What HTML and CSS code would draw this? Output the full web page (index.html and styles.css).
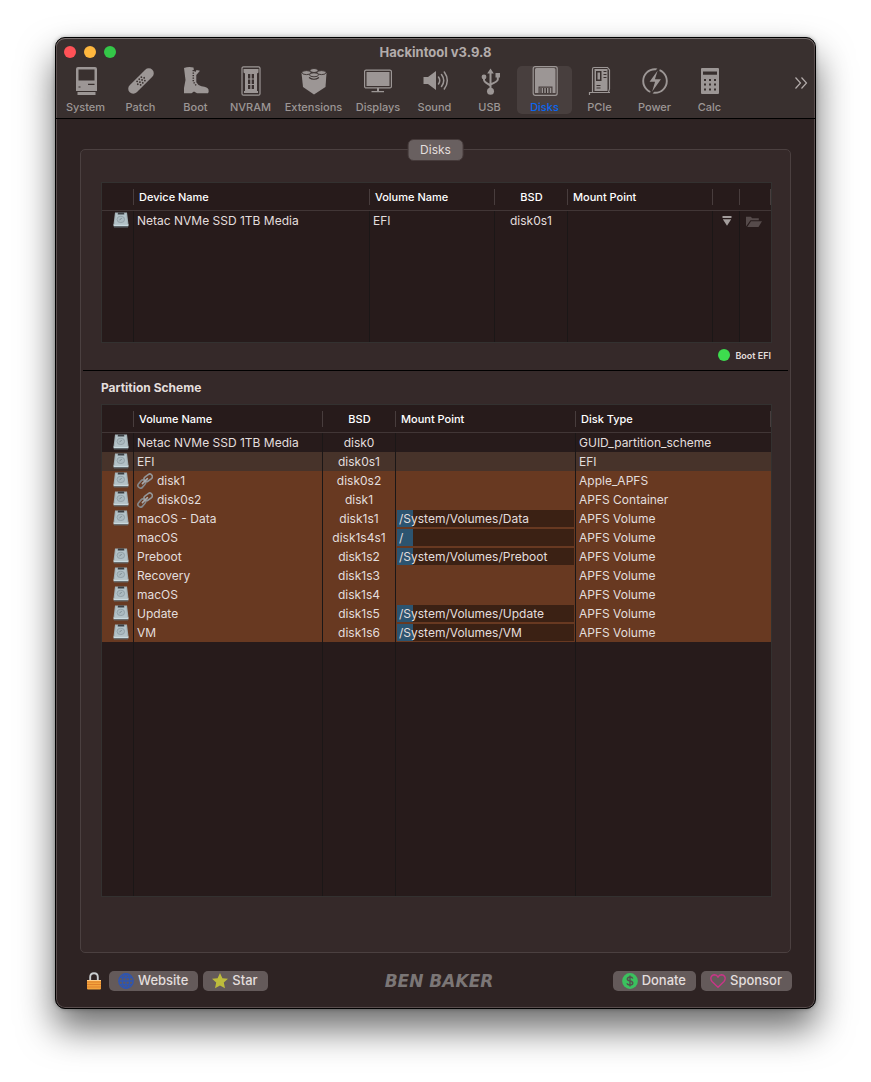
FILE: index.html
```
<!DOCTYPE html>
<html lang="en">
<head>
<meta charset="utf-8">
<title>Hackintool</title>
<link rel="stylesheet" href="styles.css">
</head>
<body>
<svg class="defs" aria-hidden="true">
  <symbol id="drive" viewBox="0 0 16 16">
    <path d="M2 .5h12L15.500 12.800H.5z" fill="#a2b0b5"/>
    <path d="M3 1.500h10l1.200 10.500H1.800z" fill="#b3c2c8"/>
    <path d="M5 .6h6l.3 2H4.700z" fill="#3b3e42"/>
    <ellipse cx="7.800" cy="7.400" rx="3.800" ry="3.200" fill="#abbac0" stroke="#8d9ba1" stroke-width=".8"/>
    <path d="M6.500 7.800l2.200-1.400" stroke="#6f7d83" stroke-width=".8" fill="none"/>
    <path d="M.5 12.300h15v2H.5z" fill="#c9dae0"/>
    <path d="M1 14.200h14v1.200H1z" fill="#626d72"/>
  </symbol>
  <symbol id="chain" viewBox="0 0 16 16">
    <g fill="none" stroke-width="1.600">
      <rect x="-4.500" y="-2.600" width="9" height="5.200" rx="2.600" transform="translate(4.800 11) rotate(-50)" stroke="#85888b"/>
      <rect x="-4.500" y="-2.600" width="9" height="5.200" rx="2.600" transform="translate(11.200 4.800) rotate(-36)" stroke="#94979a"/>
      <path d="M5.400 10.600l5-5" stroke="#a9abad" stroke-linecap="round"/>
    </g>
  </symbol>
</svg>

<main class="window">
  <header class="toolbar">
    <div class="titlebar">
      <div class="lights">
        <button class="light close" aria-label="Close"></button>
        <button class="light minimize" aria-label="Minimize"></button>
        <button class="light zoom" aria-label="Zoom"></button>
      </div>
      <h1 class="title">Hackintool v3.9.8</h1>
    </div>
    <nav class="items">
      <button class="item"><svg viewBox="0 0 30 30"><path fill-rule="evenodd" d="M7 1h17a2 2 0 0 1 2 2v22H5V3a2 2 0 0 1 2-2zM7.500 3.500v11h16v-11zM17 19h6.500v-1.200H17zM7.500 20.500v1h2v-1z"/><path d="M6.500 26h18v3h-18z"/></svg><span>System</span></button>
      <button class="item"><svg viewBox="0 0 30 30"><g transform="rotate(-45 15 15)"><rect x="-1" y="10" width="32" height="10" rx="5"/><g fill="#39302f"><circle cx="12" cy="12.500" r=".9"/><circle cx="15" cy="12.500" r=".9"/><circle cx="18" cy="12.500" r=".9"/><circle cx="10.500" cy="15" r=".9"/><circle cx="13.500" cy="15" r=".9"/><circle cx="16.500" cy="15" r=".9"/><circle cx="19.500" cy="15" r=".9"/><circle cx="12" cy="17.500" r=".9"/><circle cx="15" cy="17.500" r=".9"/><circle cx="18" cy="17.500" r=".9"/></g></g></svg><span>Patch</span></button>
      <button class="item"><svg viewBox="0 0 30 30"><path d="M3 2Q7.500.4 12.500 1.500l.5 3.500 1.500 1 1-2 3.500.7-3.700 4.300v7.200q1.500 3 5.200 4 6.500.8 7 3.300.6 2.500-.6 3.700H16l-3-1.700-2.500 1.700H3V22l1.500-8z"/><path d="M12.300 4v11.700l3 4" fill="none" stroke="#39302f" stroke-width="1.500" stroke-dasharray="1.300 1.200"/></svg><span>Boot</span></button>
      <button class="item"><svg viewBox="0 0 30 30"><rect x="6" y=".8" width="18" height="28.400" rx="1.500" fill="none" stroke="currentColor" stroke-width="1.200"/><path fill-rule="evenodd" d="M7.500 3h15v3.500l-1.500 1V25h1v2H8v-2h1V7.500l-1.500-1zM12 8v4.500h2.300V8zm3.700 0v4.500H18V8zM12 13.500V18h2.300v-4.500zm3.700 0V18H18v-4.500zM12 19v4h2.300v-4zm3.700 0v4H18v-4z"/></svg><span>NVRAM</span></button>
      <button class="item wide"><svg viewBox="0 0 30 30"><path d="M2.500 7h25l-1 14L15 28.500 4 21z"/><g stroke="#39302f" stroke-width=".9"><ellipse cx="15" cy="4.500" rx="4" ry="2"/><ellipse cx="7.500" cy="6.600" rx="4.500" ry="2"/><ellipse cx="22.500" cy="6.600" rx="4.500" ry="2"/><ellipse cx="15" cy="8.800" rx="4.500" ry="2"/></g><path d="M10 11.500q5 3.500 10 0" fill="none" stroke="#39302f" stroke-width="1.200"/></svg><span>Extensions</span></button>
      <button class="item medium"><svg viewBox="0 0 30 30"><rect x="1.600" y="4.100" width="26.800" height="17.800" rx="1.500" fill="none" stroke="currentColor" stroke-width="1.200"/><path d="M3.500 6h23v14h-23zM14 22h2v3h5v1.300H8.500V25H14z"/></svg><span>Displays</span></button>
      <button class="item"><svg viewBox="0 0 30 30"><path d="M3.500 11H8l8-6v19l-8-6H3.500z"/><g fill="none" stroke="currentColor" stroke-width="1.500" stroke-linecap="round"><path d="M18.500 11q2.500 3.500 0 7M21.500 8.500q4.500 6 0 12M24.300 6q6 8.500 0 17"/></g></svg><span>Sound</span></button>
      <button class="item"><svg viewBox="0 0 30 30"><circle cx="15.500" cy="25.200" r="3.500"/><path d="M15.500 2.500l3.300 5h-6.600zM20.500 7h4.500v4.500h-4.500z"/><circle cx="9" cy="11" r="2.400"/><path d="M15.500 6v18M9 11v3q0 2 6.500 5.500M22.800 10v3.500q0 2-7.300 5" fill="none" stroke="currentColor" stroke-width="2"/></svg><span>USB</span></button>
      <button class="item selected" aria-pressed="true"><svg viewBox="0 0 30 30"><rect x="3.200" y=".7" width="24" height="28.600" rx="2" fill="none" stroke="currentColor" stroke-width="1.200"/><path fill-rule="evenodd" d="M6.500 2H24a1.500 1.500 0 0 1 1.500 1.500V27H5V3.500A1.500 1.500 0 0 1 6.500 2zM8.500 20.500V27h1.200v-5.200h11.600V27h1.200v-6.500z"/><path d="M11 22v5m2.700-5v5m2.700-5v5m2.700-5v5" stroke="#39302f" stroke-width="1.200"/></svg><span>Disks</span></button>
      <button class="item"><svg viewBox="0 0 30 30"><path d="M4.500 29v-2.500h20.500M7.500 26V3q0-1.500 1.500-1.500h13.500L24.500 4v19l-1 3" fill="none" stroke="currentColor" stroke-width="1.200"/><path fill-rule="evenodd" d="M9.500 3h13v22h-13zM11 5v10h5.500V5zM18.500 5v1h3V5zm0 3v1h3V8zm0 3v1h3v-1zm-7 8v1h4v-1zm0 2.500v1h4v-1z"/><path d="M12.500 6.500H15v7h-2.500z"/></svg><span>PCIe</span></button>
      <button class="item"><svg viewBox="0 0 30 30"><circle cx="15" cy="15" r="11.800" fill="none" stroke="currentColor" stroke-width="1.900"/><path d="M20 0L8 16.500h6L10 30l12.500-17.500H16z" stroke="#39302f" stroke-width="1.600"/></svg><span>Power</span></button>
      <button class="item"><svg viewBox="0 0 30 30"><path fill-rule="evenodd" d="M7 2h16a1 1 0 0 1 1 1v24a1 1 0 0 1-1 1H7a1 1 0 0 1-1-1V3a1 1 0 0 1 1-1zM8 5.500v3.300h14V5.500z"/><path d="M9 14h13M9 18.500h13M9 23.500h13" stroke="#39302f" stroke-width="2" stroke-dasharray="2 3"/></svg><span>Calc</span></button>
      <button class="more" aria-label="More items"><svg viewBox="0 0 14 14"><path d="M1.500 1.500L6.500 7l-5 5.500M7.500 1.500l5 5.500-5 5.500" fill="none" stroke="currentColor" stroke-width="1.200"/></svg></button>
    </nav>
  </header>

  <section class="content">
    <div class="group">
      <button class="tab">Disks</button>

      <table class="grid">
        <colgroup><col class="c-icon"><col class="c-device"><col class="c-volume"><col class="c-bsd"><col class="c-mount"><col class="c-eject"><col></colgroup>
        <thead><tr><th></th><th>Device Name</th><th>Volume Name</th><th class="center">BSD</th><th>Mount Point</th><th></th><th></th></tr></thead>
        <tbody>
          <tr><td class="icon"><svg class="drive"><use href="#drive"/></svg></td><td>Netac NVMe SSD 1TB Media</td><td>EFI</td><td class="center">disk0s1</td><td></td>
            <td class="icon"><button class="action" aria-label="Mount"><svg class="mount" viewBox="0 0 10 10"><path d="M.5 0h9v2h-9zM.8 3.200h8.400L5 9.800z"/></svg></button></td>
            <td class="icon"><button class="action dim" aria-label="Open"><svg class="folder" viewBox="0 0 16 12"><path d="M0 10.500V.8h4.800l1.400 1.500h6.600v2H4.500zM5 5.300h11L12.500 11H1.200z"/></svg></button></td></tr>
          <tr class="filler small"><td></td><td></td><td></td><td></td><td></td><td></td><td></td></tr>
        </tbody>
      </table>

      <div class="legend"><span class="dot"></span>Boot EFI</div>
      <hr class="divider">
      <h2 class="heading">Partition Scheme</h2>

      <table class="grid">
        <colgroup><col class="c-icon"><col class="c-name"><col class="c-bsd"><col class="c-path"><col></colgroup>
        <thead><tr><th></th><th>Volume Name</th><th class="center">BSD</th><th>Mount Point</th><th>Disk Type</th></tr></thead>
        <tbody>
          <tr><td class="icon"><svg class="drive"><use href="#drive"/></svg></td><td>Netac NVMe SSD 1TB Media</td><td class="center">disk0</td><td></td><td>GUID_partition_scheme</td></tr>
          <tr class="efi"><td class="icon"><svg class="drive"><use href="#drive"/></svg></td><td>EFI</td><td class="center">disk0s1</td><td></td><td>EFI</td></tr>
          <tr class="apfs"><td class="icon"><svg class="drive"><use href="#drive"/></svg></td><td><svg class="chain"><use href="#chain"/></svg>disk1</td><td class="center">disk0s2</td><td></td><td>Apple_APFS</td></tr>
          <tr class="apfs"><td class="icon"><svg class="drive"><use href="#drive"/></svg></td><td><svg class="chain"><use href="#chain"/></svg>disk0s2</td><td class="center">disk1</td><td></td><td>APFS Container</td></tr>
          <tr class="apfs"><td class="icon"><svg class="drive"><use href="#drive"/></svg></td><td>macOS - Data</td><td class="center">disk1s1</td><td class="field"><input class="path" aria-label="Mount point of disk1s1" value="/System/Volumes/Data" readonly></td><td>APFS Volume</td></tr>
          <tr class="apfs"><td></td><td>macOS</td><td class="center">disk1s4s1</td><td class="field"><input class="path" aria-label="Mount point of disk1s4s1" value="/" readonly></td><td>APFS Volume</td></tr>
          <tr class="apfs"><td class="icon"><svg class="drive"><use href="#drive"/></svg></td><td>Preboot</td><td class="center">disk1s2</td><td class="field"><input class="path" aria-label="Mount point of disk1s2" value="/System/Volumes/Preboot" readonly></td><td>APFS Volume</td></tr>
          <tr class="apfs"><td class="icon"><svg class="drive"><use href="#drive"/></svg></td><td>Recovery</td><td class="center">disk1s3</td><td></td><td>APFS Volume</td></tr>
          <tr class="apfs"><td class="icon"><svg class="drive"><use href="#drive"/></svg></td><td>macOS</td><td class="center">disk1s4</td><td></td><td>APFS Volume</td></tr>
          <tr class="apfs"><td class="icon"><svg class="drive"><use href="#drive"/></svg></td><td>Update</td><td class="center">disk1s5</td><td class="field"><input class="path" aria-label="Mount point of disk1s5" value="/System/Volumes/Update" readonly></td><td>APFS Volume</td></tr>
          <tr class="apfs"><td class="icon"><svg class="drive"><use href="#drive"/></svg></td><td>VM</td><td class="center">disk1s6</td><td class="field"><input class="path" aria-label="Mount point of disk1s6" value="/System/Volumes/VM" readonly></td><td>APFS Volume</td></tr>
          <tr class="filler large"><td></td><td></td><td></td><td></td><td></td></tr>
        </tbody>
      </table>
    </div>
  </section>

  <footer class="footer">
    <div class="side">
      <button class="lock" aria-label="Lock"><svg viewBox="0 0 16 18"><path d="M4.200 9V5q0-3.800 3.800-3.800T11.800 5v4" fill="none" stroke="#c9cdcf" stroke-width="1.900"/><rect x="1" y="8" width="14" height="9.500" rx="1" fill="#f2a33c"/><path d="M1 10h14M1 12.500h14M1 15h14" stroke="#d9782a" stroke-width=".8"/><path d="M1 8.500h14" stroke="#ffd08a"/></svg></button>
      <button class="push"><svg viewBox="0 0 16 16" fill="none" stroke="#2f55b0" stroke-width="1.400"><circle cx="8" cy="8" r="7.200"/><ellipse cx="8" cy="8" rx="3.600" ry="7.200"/><path d="M8 1v14M1 8h14M2.200 4.500h11.600M2.200 11.500h11.600"/></svg>Website</button>
      <button class="push"><svg viewBox="0 0 16 16"><path d="M8 0l2.400 5.200 5.600.6-4.200 3.800 1.200 5.600L8 12.400 3 15.200l1.200-5.600L0 5.800l5.600-.6z" fill="#bdbb3c"/></svg>Star</button>
    </div>
    <a class="brand" href="#">BEN BAKER</a>
    <div class="side end">
      <button class="push"><svg viewBox="0 0 16 16"><circle cx="8" cy="8" r="7.900" fill="#3bc15e"/><path d="M10.800 5.600Q10.300 4 8 4T5.300 6q0 1.600 2.700 2t2.800 2.100Q10.800 12 8 12t-2.900-1.700M8 2.500v11" fill="none" stroke="#56504f" stroke-width="1.400"/></svg>Donate</button>
      <button class="push"><svg viewBox="0 0 16 16"><path d="M8 14.200L2 8.500Q.4 6.500 1 4.300 2 1.800 4.500 1.800 7 1.900 8 4.200 9 1.900 11.500 1.800 14 1.800 15 4.300 15.600 6.500 14 8.500z" fill="none" stroke="#c93587" stroke-width="1.400" stroke-linejoin="round"/></svg>Sponsor</button>
    </div>
  </footer>
</main>
</body>
</html>
```
FILE: styles.css
```
* {
  box-sizing: border-box;
}

body {
  margin: 0;
  padding: 37px 55px 73px;
  background: #fff;
  color: #e3dedd;
  font: 12px/19px Inter, "Liberation Sans", sans-serif;
}

button {
  margin: 0;
  padding: 0;
  border: 0;
  background: none;
  color: inherit;
  font: inherit;
}

svg {
  display: block;
  flex: none;
}

.defs {
  position: absolute;
  width: 0;
  height: 0;
}

.window {
  overflow: hidden;
  border: 1px solid #000;
  border-radius: 10px;
  background: #2e2323;
  box-shadow: inset 0 0 0 1px #5a4e4e, 0 0 4px rgba(0, 0, 0, .3), 0 20px 36px rgba(0, 0, 0, .58);
}

/* Title bar and toolbar */

.toolbar {
  padding-bottom: 4px;
  border-bottom: 1px solid #000;
  background: #39302f;
  box-shadow: inset 0 1px #7a7271, inset 1px 0 #5a4e4e, inset -1px 0 #5a4e4e;
  border-radius: 9px 9px 0 0;
}

.titlebar {
  display: grid;
  grid-template-columns: 1fr auto 1fr;
  align-items: center;
  height: 28px;
  padding: 0 8px;
}

.lights {
  display: flex;
  gap: 8px;
}

.light {
  width: 12px;
  height: 12px;
  border-radius: 50%;
}

.close { background: #ff5257; }
.minimize { background: #ffb73e; }
.zoom { background: #34c748; }

.title {
  margin: 0;
  color: #b3acab;
  font-size: 13px;
  font-weight: 700;
}

.items {
  display: flex;
  padding: 0 7px 0 2px;
}

.item {
  display: flex;
  flex-direction: column;
  align-items: center;
  justify-content: flex-start;
  gap: 4px;
  width: 55px;
  height: 48px;
  border-radius: 5px;
  color: #9c9695;
  font-size: 11px;
  font-weight: 500;
  line-height: 15px;
}

.item.wide { width: 71px; }
.item.medium { width: 58px; }

.item svg {
  width: 30px;
  height: 30px;
  fill: currentColor;
}

.item.selected { background: #483f3e; }
.item.selected span { color: #0a66f0; }

.more {
  margin-left: auto;
  padding-bottom: 14px;
  color: #b3acab;
}

.more svg {
  width: 14px;
  height: 14px;
}

/* Disks pane */

.content {
  padding: 30px 24px 0;
}

.group {
  position: relative;
  padding: 32px 18px 55px 20px;
  border: 1px solid #4b4040;
  border-radius: 5px;
  background: #352929;
}

.tab {
  position: absolute;
  top: -11px;
  left: 50%;
  height: 22px;
  padding: 0 12px 2px;
  transform: translateX(-50%);
  border: 1px solid #463b3b;
  border-radius: 6px;
  background: #696060;
}

.grid {
  width: 100%;
  border: 1px solid #333130;
  border-spacing: 0;
  table-layout: fixed;
  background: #271b1b;
}

.c-icon { width: 32px; }
.c-device { width: 236px; }
.c-volume { width: 125px; }
.c-bsd { width: 73px; }
.c-mount { width: 145px; }
.c-eject { width: 27px; }
.c-name { width: 189px; }
.c-path { width: 180px; }

.grid th {
  height: 28px;
  padding: 2px 5px 0;
  border-bottom: 1px solid #413636;
  background: linear-gradient(#483d3d, #483d3d) right center / 1px 16px no-repeat;
  color: #fff;
  font-size: 11px;
  font-weight: 500;
  text-align: left;
}

.grid td {
  height: 19px;
  padding: 0 3px;
  border-right: 1px solid #1b1717;
  white-space: nowrap;
}

.grid td:last-child { border-right: 0; }

.grid .center {
  padding-right: 0;
  padding-left: 0;
  text-align: center;
}

.grid .icon {
  padding: 1px 0 0 6px;
  vertical-align: top;
}

.grid .field { padding: 1px 1px 1px 1px; }
.grid .small td { height: 112px; }
.grid .large td { height: 254px; }

.efi { background: #47332a; }
.apfs { background: #683921; }

.drive {
  width: 16px;
  height: 16px;
  margin: 0 auto;
}

.chain {
  display: inline-block;
  width: 16px;
  height: 16px;
  margin-right: 4px;
  vertical-align: -4px;
}

.path {
  display: block;
  width: 100%;
  height: 17px;
  padding: 0 2px;
  border: 0;
  background: linear-gradient(90deg, #2c5470 16px, #3b2114 16px);
  color: inherit;
  font: inherit;
}

.icon .action {
  display: block;
  padding-top: 4px;
  fill: #a39d9c;
}

.icon .dim { fill: #564b4b; }

.mount {
  width: 10px;
  height: 10px;
  margin-left: 3px;
}

.folder {
  width: 16px;
  height: 12px;
}

.legend {
  display: flex;
  align-items: center;
  justify-content: flex-end;
  gap: 5px;
  height: 24px;
  padding-right: 1px;
  font-size: 9px;
  font-weight: 600;
}

.dot {
  width: 12px;
  height: 12px;
  border-radius: 50%;
  background: #3ddc4e;
}

.divider {
  height: 1px;
  margin: 3px -16px 0 -18px;
  border: 0;
  background: #000;
}

.heading {
  margin: 0;
  font-size: 12px;
  font-weight: 700;
  line-height: 33px;
}

/* Footer */

.footer {
  display: grid;
  grid-template-columns: 1fr auto 1fr;
  align-items: center;
  height: 55px;
  padding: 0 23px 0 30px;
}

.side {
  display: flex;
  align-items: center;
  gap: 5px;
}

.end { justify-content: flex-end; }

.lock svg {
  width: 16px;
  height: 18px;
}

.lock { margin-right: 2px; }

.push {
  display: flex;
  align-items: center;
  gap: 4px;
  height: 20px;
  padding: 0 10px 0 9px;
  border-radius: 5px;
  background: #645a5a;
  font-size: 13px;
  font-weight: 500;
}

.push svg {
  width: 16px;
  height: 16px;
}

.brand {
  color: #7b7676;
  font: italic 700 17px/20px "DejaVu Sans", sans-serif;
  text-decoration: none;
}
```
